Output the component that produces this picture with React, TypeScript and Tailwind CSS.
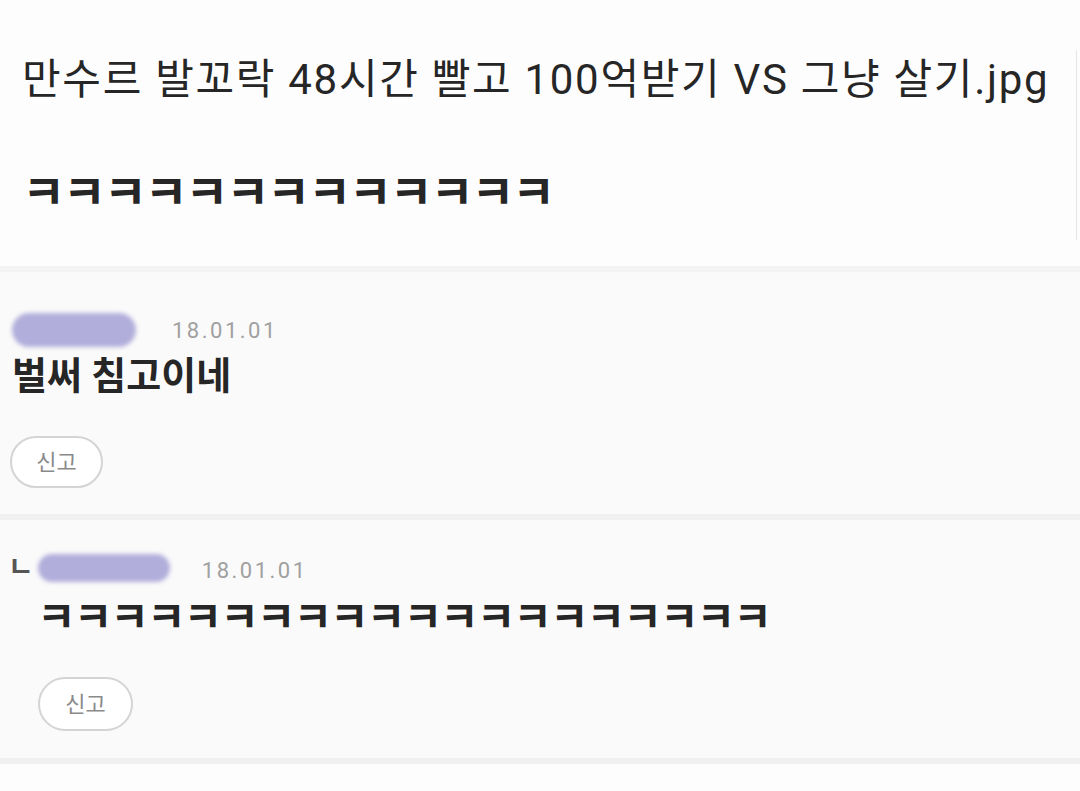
import React from 'react';

const font = { fontFamily: 'Roboto, "Noto Sans CJK KR", "Noto Sans", sans-serif' };

function BlurName({ className }: { className: string }) {
  return <div className={`rounded-full bg-[#b2aedb] blur-[2px] ${className}`} />;
}

function ReportButton({ className }: { className: string }) {
  return (
    <button
      className={`flex items-center justify-center rounded-full border-2 border-[#d4d4d4] bg-white text-[22px] text-[#8a8a8a] ${className}`}
    >
      신고
    </button>
  );
}

export default function App() {
  return (
    <main className="w-[1080px] h-[791px] overflow-hidden bg-[#fdfdfd] text-[#262626]" style={font}>
      {/* post body */}
      <section className="h-[266px] flex">
        <div className="flex-1 px-[22px] pt-[50px]">
          <h1 className="text-[42px] leading-[60px] font-normal tracking-[1.7px] whitespace-nowrap text-[#262626]">
            만수르 발꼬락 48시간 빨고 100억받기 VS 그냥 살기.jpg
          </h1>
          <p className="mt-[58px] text-[47px] leading-[50px] font-bold tracking-[-2.4px]">ㅋㅋㅋㅋㅋㅋㅋㅋㅋㅋㅋㅋㅋ</p>
        </div>
        <div className="w-px mt-[50px] h-[190px] bg-[#e6e6e6] mr-[3px]" />
      </section>

      {/* comments */}
      <section className="bg-[#fafafa] border-t-[6px] border-[#f3f3f3]">
        <div className="h-[248px] px-[12px] pt-[40px] border-b-[6px] border-[#f0f0f0]">
          <div className="flex items-center gap-[36px] h-[36px]">
            <BlurName className="w-[124px] h-[34px]" />
            <span className="text-[22px] text-[#a0a0a0] tracking-[2.5px]">18.01.01</span>
          </div>
          <p className="mt-[4px] text-[38px] leading-[48px] font-bold">벌써 침고이네</p>
          <ReportButton className="mt-[36px] -ml-[2px] w-[93px] h-[52px]" />
        </div>

        <div className="h-[244px] px-[8px] pt-[32px] border-b-[6px] border-[#f0f0f0]">
          <div className="flex items-center h-[32px]">
            <span className="text-[28px] font-bold text-[#555] leading-none">ㄴ</span>
            <BlurName className="ml-[4px] w-[132px] h-[28px]" />
            <span className="ml-[32px] mt-[4px] text-[22px] text-[#a0a0a0] tracking-[2.5px]">18.01.01</span>
          </div>
          <p className="mt-[12px] pl-[29px] text-[42px] leading-[44px] font-bold tracking-[-2px]">
            ㅋㅋㅋㅋㅋㅋㅋㅋㅋㅋㅋㅋㅋㅋㅋㅋㅋㅋㅋㅋ
          </p>
          <ReportButton className="ml-[30px] mt-[37px] w-[95px] h-[54px]" />
        </div>
      </section>
    </main>
  );
}
